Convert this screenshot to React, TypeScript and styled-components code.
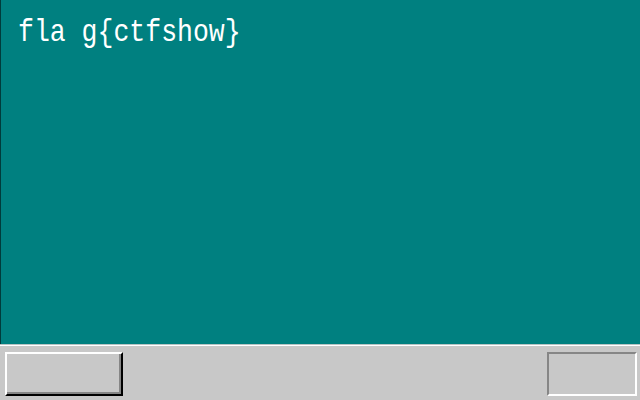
import React from "react";
import styled, { createGlobalStyle } from "styled-components";

const Global = createGlobalStyle`
  html, body { margin: 0; padding: 0; background: #c8c8c8; }
  #root { width: 640px; height: 400px; }
`;

const Screen = styled.div`
  width: 640px;
  height: 400px;
  display: flex;
  flex-direction: column;
  overflow: hidden;
`;

const Desktop = styled.div`
  height: 344px;
  background: #008080;
  border-left: 1px solid #003c3c;
  box-sizing: border-box;
  padding: 11px 0 0 17px;
`;

const FlagText = styled.div`
  color: #ffffff;
  font-family: "Liberation Mono", "DejaVu Sans Mono", monospace;
  font-size: 26.5px;
  line-height: 36px;
  white-space: pre;
  transform: scaleY(1.2);
  transform-origin: top left;
`;

const Bar = styled.div`
  flex: 1;
  background: #c8c8c8;
  border-top: 1px solid #b8c4c4;
  box-shadow: inset 0 1px 0 #ffffff;
  display: flex;
  justify-content: space-between;
  align-items: flex-start;
  padding: 7px 3px 0 5px;
`;

const Btn = styled.div<{ $sunken?: boolean; $w: number }>`
  width: ${(p) => p.$w}px;
  height: 44px;
  box-sizing: border-box;
  background: #c8c8c8;
  border-style: solid;
  border-width: 2px;
  border-color: ${(p) =>
    p.$sunken ? "#868686 #ffffff #ffffff #868686" : "#ffffff #000000 #000000 #ffffff"};
  box-shadow: ${(p) => (p.$sunken ? "none" : "inset -2px -2px 0 #868686")};
`;

export default function App() {
  return (
    <>
      <Global />
      <Screen>
        <Desktop>
          <FlagText>fla g{"{"}ctfshow{"}"}</FlagText>
        </Desktop>
        <Bar>
          <Btn $w={118} />
          <Btn $w={90} $sunken />
        </Bar>
      </Screen>
    </>
  );
}
